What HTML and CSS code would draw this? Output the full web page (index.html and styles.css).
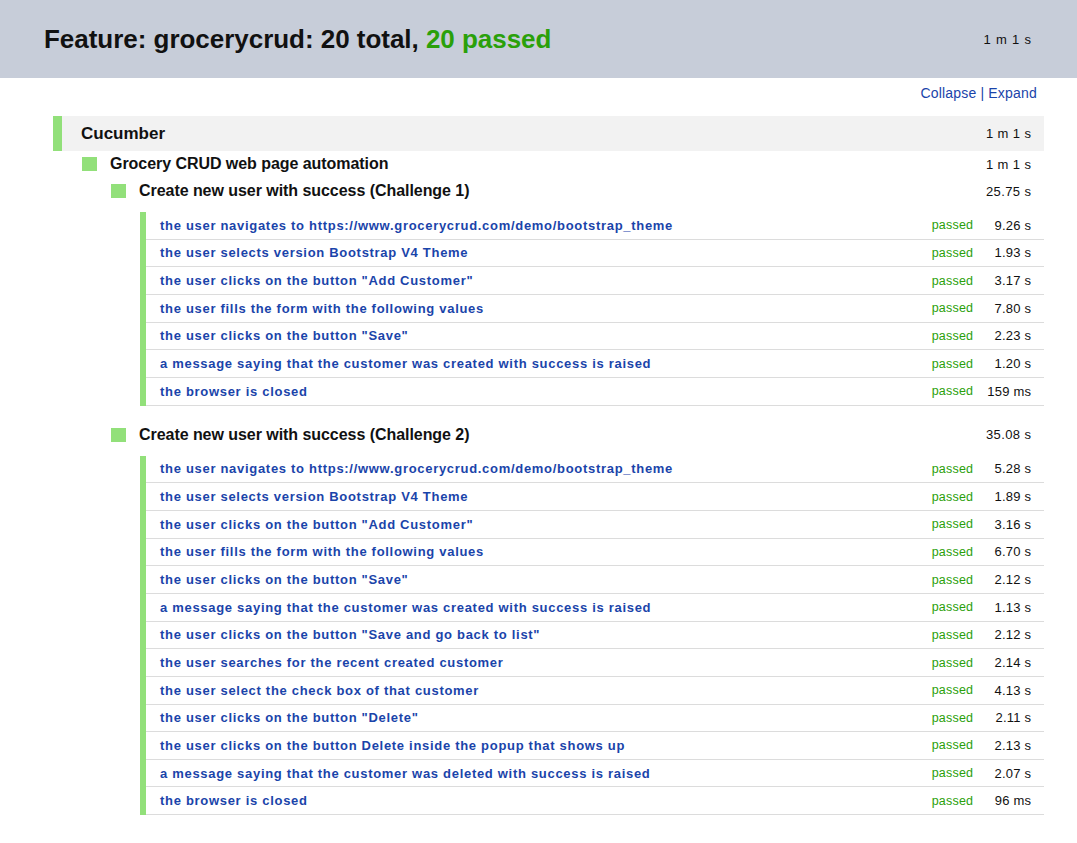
FILE: index.html
```html
<!DOCTYPE html>
<html>
<head>
<meta charset="utf-8">
<link rel="stylesheet" href="styles.css">
</head>
<body>
<header class="top">
  <h1 class="title">Feature: grocerycrud: 20 total, <span class="ok">20 passed</span></h1>
  <span class="top-time">1 m 1 s</span>
</header>
<div class="toggles"><a class="link">Collapse</a> | <a class="link">Expand</a></div>
<section class="report">
  <div class="feature-row"><span class="feature-name">Cucumber</span><span class="dur">1 m 1 s</span></div>
  <div class="suite-row"><span class="sq"></span><span class="suite-name">Grocery CRUD web page automation</span><span class="dur">1 m 1 s</span></div>

  <div class="scenario">
    <div class="scenario-row"><span class="sq"></span><span class="scenario-name">Create new user with success (Challenge 1)</span><span class="dur">25.75 s</span></div>
    <div class="steps">
      <div class="step"><span class="step-name">the user navigates to https://www.grocerycrud.com/demo/bootstrap_theme</span><span class="status">passed</span><span class="sdur">9.26 s</span></div>
      <div class="step"><span class="step-name">the user selects version Bootstrap V4 Theme</span><span class="status">passed</span><span class="sdur">1.93 s</span></div>
      <div class="step"><span class="step-name">the user clicks on the button "Add Customer"</span><span class="status">passed</span><span class="sdur">3.17 s</span></div>
      <div class="step"><span class="step-name">the user fills the form with the following values</span><span class="status">passed</span><span class="sdur">7.80 s</span></div>
      <div class="step"><span class="step-name">the user clicks on the button "Save"</span><span class="status">passed</span><span class="sdur">2.23 s</span></div>
      <div class="step"><span class="step-name">a message saying that the customer was created with success is raised</span><span class="status">passed</span><span class="sdur">1.20 s</span></div>
      <div class="step"><span class="step-name">the browser is closed</span><span class="status">passed</span><span class="sdur">159 ms</span></div>
    </div>
  </div>

  <div class="scenario">
    <div class="scenario-row"><span class="sq"></span><span class="scenario-name">Create new user with success (Challenge 2)</span><span class="dur">35.08 s</span></div>
    <div class="steps">
      <div class="step"><span class="step-name">the user navigates to https://www.grocerycrud.com/demo/bootstrap_theme</span><span class="status">passed</span><span class="sdur">5.28 s</span></div>
      <div class="step"><span class="step-name">the user selects version Bootstrap V4 Theme</span><span class="status">passed</span><span class="sdur">1.89 s</span></div>
      <div class="step"><span class="step-name">the user clicks on the button "Add Customer"</span><span class="status">passed</span><span class="sdur">3.16 s</span></div>
      <div class="step"><span class="step-name">the user fills the form with the following values</span><span class="status">passed</span><span class="sdur">6.70 s</span></div>
      <div class="step"><span class="step-name">the user clicks on the button "Save"</span><span class="status">passed</span><span class="sdur">2.12 s</span></div>
      <div class="step"><span class="step-name">a message saying that the customer was created with success is raised</span><span class="status">passed</span><span class="sdur">1.13 s</span></div>
      <div class="step"><span class="step-name">the user clicks on the button "Save and go back to list"</span><span class="status">passed</span><span class="sdur">2.12 s</span></div>
      <div class="step"><span class="step-name">the user searches for the recent created customer</span><span class="status">passed</span><span class="sdur">2.14 s</span></div>
      <div class="step"><span class="step-name">the user select the check box of that customer</span><span class="status">passed</span><span class="sdur">4.13 s</span></div>
      <div class="step"><span class="step-name">the user clicks on the button "Delete"</span><span class="status">passed</span><span class="sdur">2.11 s</span></div>
      <div class="step"><span class="step-name">the user clicks on the button Delete inside the popup that shows up</span><span class="status">passed</span><span class="sdur">2.13 s</span></div>
      <div class="step"><span class="step-name">a message saying that the customer was deleted with success is raised</span><span class="status">passed</span><span class="sdur">2.07 s</span></div>
      <div class="step"><span class="step-name">the browser is closed</span><span class="status">passed</span><span class="sdur">96 ms</span></div>
    </div>
  </div>
</section>
</body>
</html>
```

FILE: styles.css
```css
* { box-sizing: border-box; }
html, body { margin: 0; padding: 0; background: #fff; }
body { font-family: "Liberation Sans", Arial, sans-serif; color: #111; }

.top {
  background: #c7cdd9;
  height: 78px;
  display: flex;
  align-items: center;
  justify-content: space-between;
  padding: 0 46px 0 44px;
}
.title { margin: 0; font-size: 26px; font-weight: bold; color: #111; letter-spacing: -0.03px; }
.ok { color: #2aa00a; }
.top-time { font-size: 13px; color: #111; letter-spacing: 0.8px; margin-right: -0.8px; }

.toggles {
  height: 38px;
  display: flex;
  align-items: flex-start;
  justify-content: flex-end;
  padding: 7px 40px 0 0;
  font-size: 14px;
  color: #1a44aa;
  letter-spacing: 0.2px;
}
.link { color: #1a44aa; margin: 0 4px; }
.link:last-child { margin-right: 0; }

.report { margin: 0 33px 0 53px; }

.feature-row {
  height: 35px;
  background: #f2f2f2;
  border-left: 9px solid #92e07a;
  display: flex;
  align-items: center;
  padding: 0 13px 0 19px;
}
.feature-name { font-size: 17px; font-weight: bold; flex: 1; }
.dur { font-size: 13px; letter-spacing: 0.4px; margin-right: -0.4px; }

.suite-row, .scenario-row {
  display: flex;
  align-items: center;
  padding-right: 13px;
}
.suite-row { height: 26px; padding-left: 29px; }
.scenario-row { height: 28px; padding-left: 58px; }
.sq {
  width: 15px;
  height: 14px;
  background: #92e07a;
  margin-right: 13px;
  flex: none;
}
.suite-name, .scenario-name { font-size: 16px; font-weight: bold; flex: 1; letter-spacing: -0.05px; }

.scenario { margin-bottom: 15px; }
.steps {
  margin: 7px 0 0 87px;
  border-left: 6px solid #92e07a;
}
.step {
  height: 27.67px;
  border-bottom: 1px solid #dcdcdc;
  display: flex;
  align-items: center;
  padding: 0 13px 0 14px;
}
.step-name { flex: 1; font-size: 13px; font-weight: bold; color: #1a44aa; letter-spacing: 0.7px; }
.status { font-size: 12.5px; color: #2aa00a; letter-spacing: 0.2px; }
.sdur { width: 58px; text-align: right; font-size: 13px; color: #111; letter-spacing: 0.2px; margin-right: -0.2px; }
```
